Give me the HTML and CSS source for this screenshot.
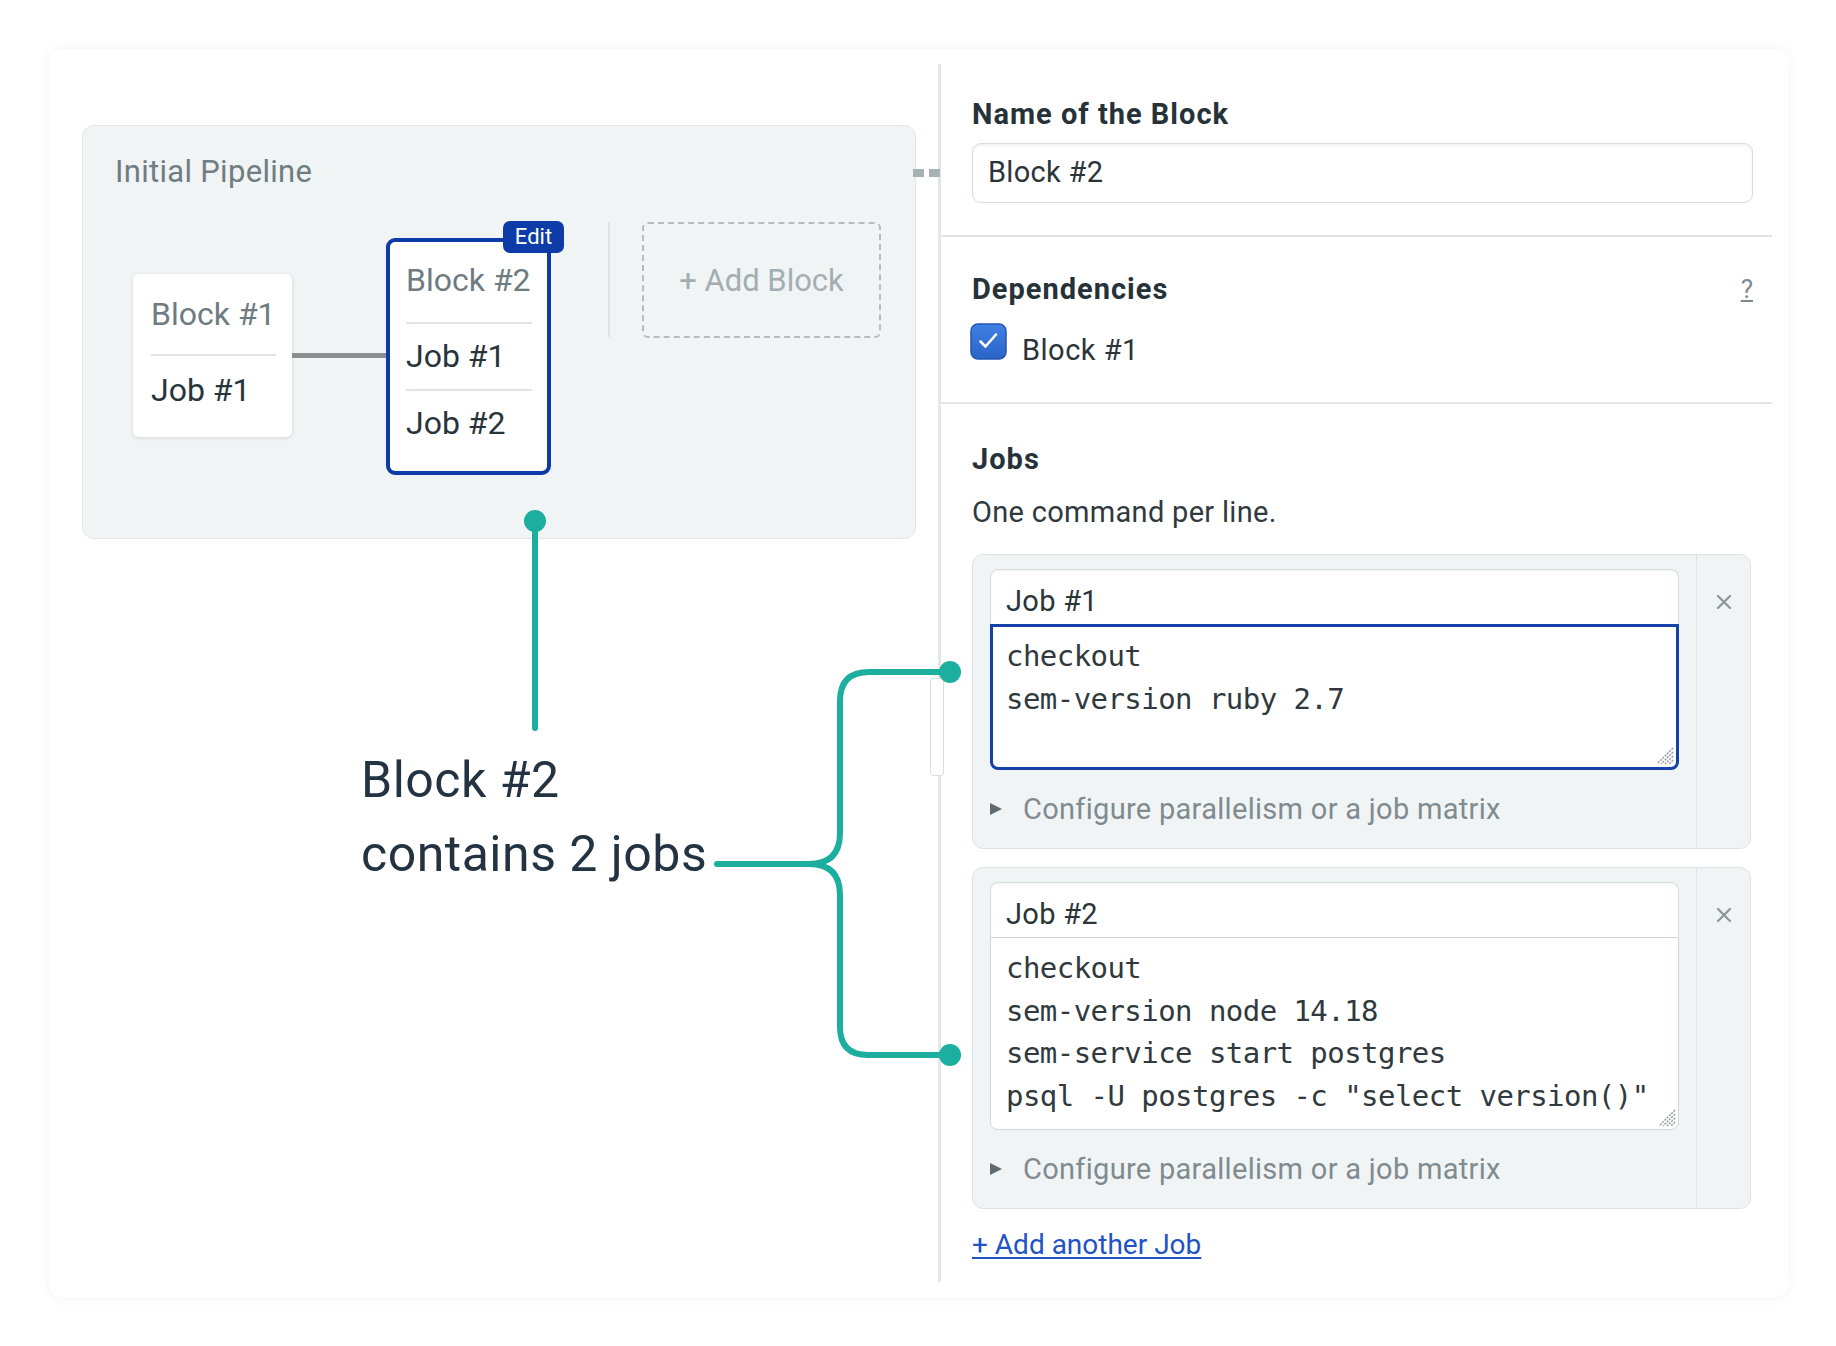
FILE: index.html
```html
<!DOCTYPE html>
<html lang="en">
<head>
<meta charset="utf-8">
<title>Block editor</title>
<link rel="stylesheet" href="styles.css">
</head>
<body>
<div class="card">
  <div class="left">
    <div class="pipeline">
      <div class="pl-title">Initial Pipeline</div>
      <div class="pl-row">
        <div class="blk blk1">
          <div class="blk-title">Block #1</div>
          <div class="blk-job">Job #1</div>
        </div>
        <div class="conn"></div>
        <div class="blk blk2">
          <span class="edit">Edit</span>
          <div class="blk-title">Block #2</div>
          <div class="blk-job">Job #1</div>
          <div class="blk-job">Job #2</div>
        </div>
        <div class="pl-sep"></div>
        <div class="add-block">+ Add Block</div>
      </div>
    </div>
    <div class="note">Block #2<br>contains 2 jobs</div>
  </div>
  <div class="vdiv"></div>
  <div class="right">
    <section class="sec sec-name">
      <div class="lbl">Name of the Block</div>
      <div class="inp">Block #2</div>
    </section>
    <section class="sec sec-dep">
      <div class="dep-head">
        <div class="lbl">Dependencies</div>
        <span class="help">?</span>
      </div>
      <div class="check-row">
        <svg class="checkbox" width="37" height="37" viewBox="0 0 37 37">
          <defs>
            <linearGradient id="cbg" x1="0" y1="0" x2="0" y2="1">
              <stop offset="0" stop-color="#3f82e4"/>
              <stop offset="1" stop-color="#2b63c6"/>
            </linearGradient>
          </defs>
          <rect x="1" y="1" width="35" height="35" rx="7" fill="url(#cbg)" stroke="#2356b6" stroke-width="1.5"/>
          <path d="M10.5 18.5 L15.5 23.5 L26 11.5" fill="none" stroke="#ffffff" stroke-width="2.6" stroke-linecap="round" stroke-linejoin="round"/>
        </svg>
        <span class="check-label">Block #1</span>
      </div>
    </section>
    <section class="sec sec-jobs">
      <div class="lbl">Jobs</div>
      <div class="desc">One command per line.</div>

      <div class="job">
        <div class="job-main">
          <div class="jname">Job #1</div>
          <div class="jcode active">checkout<br>sem-version ruby 2.7
            <svg class="grip" width="22" height="22" viewBox="0 0 22 22"><path d="M21 5 L5 21 M21 9 L9 21 M21 13 L13 21 M21 17 L17 21" stroke="#8f989c" stroke-width="1.5" stroke-dasharray="2 1.2" fill="none"/></svg>
          </div>
          <div class="cfg"><span class="tri"></span>Configure parallelism or a job matrix</div>
        </div>
        <div class="job-side">
          <svg class="x" width="16" height="16" viewBox="0 0 16 16"><path d="M2 2 L14 14 M14 2 L2 14" stroke="#8d979c" stroke-width="2.4" stroke-linecap="round"/></svg>
        </div>
      </div>

      <div class="job job2">
        <div class="job-main">
          <div class="jname">Job #2</div>
          <div class="jcode idle">checkout<br>sem-version node 14.18<br>sem-service start postgres<br>psql -U postgres -c "select version()"
            <svg class="grip" width="22" height="22" viewBox="0 0 22 22"><path d="M21 5 L5 21 M21 9 L9 21 M21 13 L13 21 M21 17 L17 21" stroke="#8f989c" stroke-width="1.5" stroke-dasharray="2 1.2" fill="none"/></svg>
          </div>
          <div class="cfg"><span class="tri"></span>Configure parallelism or a job matrix</div>
        </div>
        <div class="job-side">
          <svg class="x" width="16" height="16" viewBox="0 0 16 16"><path d="M2 2 L14 14 M14 2 L2 14" stroke="#8d979c" stroke-width="2.4" stroke-linecap="round"/></svg>
        </div>
      </div>

      <a class="add-job" href="#">+ Add another Job</a>
    </section>
  </div>

  <div class="dash-link"><span></span><span></span></div>
  <div class="thumb"></div>

  <svg class="overlay" width="1739" height="1248" viewBox="0 0 1739 1248">
    <g fill="none" stroke="#1cae9e" stroke-width="6" stroke-linecap="round" stroke-linejoin="round">
      <path d="M486 472 V679"/>
      <path d="M668 815 H760 Q791 815 791 784 V652 Q791 623 820 623 H901"/>
      <path d="M760 815 Q791 815 791 846 V978 Q791 1006 819 1006 H901"/>
    </g>
    <g fill="#1cae9e">
      <circle cx="486" cy="472" r="11"/>
      <circle cx="901" cy="623" r="11"/>
      <circle cx="901" cy="1006" r="11"/>
    </g>
  </svg>
</div>
</body>
</html>
```

FILE: styles.css
```css
* { box-sizing: border-box; }

html, body {
  margin: 0;
  padding: 0;
  background: #ffffff;
}

body {
  font-family: Roboto, "Noto Sans", Arial, sans-serif;
  color: #27343a;
  width: 1836px;
  height: 1346px;
  overflow: hidden;
}

.card {
  position: relative;
  margin: 49px 0 0 49px;
  width: 1739px;
  height: 1248px;
  background: #ffffff;
  border-radius: 12px;
  box-shadow: 0 0 14px rgba(0, 0, 0, 0.05);
  display: flex;
}

/* ---------- left: pipeline ---------- */
.left {
  width: 889px;
  padding: 76px 0 0 33px;
}

.pipeline {
  width: 834px;
  height: 414px;
  background: #f1f4f5;
  border: 1px solid #e1e6e8;
  border-radius: 12px;
  padding: 28px 0 0 32px;
}

.pl-title {
  font-size: 31px;
  line-height: 36px;
  letter-spacing: 0.3px;
  color: #6f7c82;
}

.pl-row {
  display: flex;
  align-items: flex-start;
  margin: 32px 0 0 18px;
}

.blk {
  background: #ffffff;
  font-size: 32px;
  white-space: nowrap;
}

.blk-title {
  color: #6e7b81;
  border-bottom: 2px solid #dfe5e7;
}

.blk-job {
  color: #27343a;
}

.blk1 {
  width: 159px;
  margin-top: 52px;
  padding: 0 16px 13px 18px;
  border-radius: 6px;
  box-shadow: 0 1px 4px rgba(0, 0, 0, 0.12);
}

.blk1 .blk-title { line-height: 80px; }
.blk1 .blk-job { line-height: 68px; }

.conn {
  width: 94px;
  height: 5px;
  margin-top: 131px;
  background: #8c8f90;
}

.blk2 {
  position: relative;
  width: 165px;
  height: 237px;
  margin-top: 16px;
  padding: 0 15px 15px 16px;
  border: 4px solid #0d3ca8;
  border-radius: 9px;
}

.blk2 .blk-title {
  line-height: 76px;
  padding-bottom: 4px;
}

.blk2 .blk-job {
  line-height: 65px;
  border-bottom: 2px solid #dfe5e7;
}

.blk2 .blk-job:last-child { border-bottom: none; }

.edit {
  position: absolute;
  top: -21px;
  right: -17px;
  width: 61px;
  height: 32px;
  border-radius: 7px;
  background: #0d3ca8;
  color: #ffffff;
  font-size: 22px;
  line-height: 32px;
  text-align: center;
}

.pl-sep {
  width: 2px;
  height: 115px;
  margin-left: 57px;
  background: #dde3e5;
}

.add-block {
  width: 239px;
  height: 116px;
  margin-left: 32px;
  border: 2px dashed #b3bdc1;
  border-radius: 6px;
  display: flex;
  align-items: center;
  justify-content: center;
  font-size: 31px;
  color: #a3adb2;
}

.note {
  margin: 204px 0 0 279px;
  font-size: 50px;
  line-height: 74px;
  letter-spacing: 0.5px;
  color: #243341;
  white-space: nowrap;
}

.vdiv {
  width: 3px;
  margin: 15px 0;
  background: #e2e7e9;
}

/* ---------- right: form ---------- */
.right {
  flex: 1;
  padding-right: 16px;
}

.sec {
  padding: 0 19px 0 31px;
  border-bottom: 2px solid #e0e5e7;
}

.lbl {
  font-size: 29px;
  font-weight: 700;
  line-height: 34px;
  letter-spacing: 1px;
  color: #263238;
}

.sec-name {
  padding-top: 48px;
  padding-bottom: 32px;
}

.inp {
  margin-top: 12px;
  height: 60px;
  border: 1.5px solid #d5dcdf;
  border-radius: 9px;
  padding-left: 15px;
  font-size: 29px;
  letter-spacing: 0.3px;
  line-height: 56px;
  color: #2a3439;
  background: #ffffff;
  box-shadow: inset 0 2px 3px rgba(0, 0, 0, 0.05);
}

.sec-dep {
  padding-top: 35px;
  padding-bottom: 42px;
}

.dep-head {
  display: flex;
  justify-content: space-between;
  align-items: center;
}

.help {
  font-size: 26px;
  color: #7d898e;
  text-decoration: underline;
}

.check-row {
  display: flex;
  align-items: flex-end;
  margin-top: 17px;
  margin-left: -2px;
  height: 37px;
}

.checkbox { display: block; }

.check-label {
  margin-left: 15px;
  margin-bottom: -7px;
  font-size: 29px;
  letter-spacing: 0.5px;
  line-height: 34px;
  color: #2a3439;
}

.sec-jobs {
  padding-top: 38px;
  border-bottom: none;
}

.desc {
  margin-top: 19px;
  font-size: 29px;
  letter-spacing: 0.3px;
  line-height: 34px;
  color: #2f393e;
}

.job {
  width: 779px;
  margin-top: 25px;
  display: flex;
  background: #f1f4f5;
  border: 1px solid #dde3e6;
  border-radius: 11px;
}

.job2 { margin-top: 18px; }

.job-main {
  flex: 1;
  padding: 14px 17px 0 17px;
}

.job-side {
  width: 54px;
  border-left: 1.5px solid #dde3e6;
  display: flex;
  justify-content: center;
  padding-top: 39px;
}

.x { display: block; }

.jname {
  height: 55px;
  border: 1.5px solid #d5dcdf;
  border-bottom: none;
  border-radius: 8px 8px 0 0;
  background: #ffffff;
  padding: 5px 0 0 15px;
  font-size: 29px;
  letter-spacing: 0.3px;
  line-height: 52px;
  color: #2a3439;
  box-shadow: inset 0 2px 3px rgba(0, 0, 0, 0.04);
}

.jcode {
  position: relative;
  background: #ffffff;
  border-radius: 0 0 8px 8px;
  font-family: "DejaVu Sans Mono", "Liberation Mono", monospace;
  font-size: 29px;
  letter-spacing: -0.55px;
  color: #30393d;
  white-space: nowrap;
}

.jcode.active {
  height: 146px;
  border: 3px solid #1541a9;
  padding: 8px 13px;
  line-height: 43px;
}

.jcode.idle {
  height: 193px;
  border: 1.5px solid #d0d7da;
  padding: 9px 15px;
  line-height: 42.5px;
}

.grip {
  position: absolute;
  right: 2px;
  bottom: 2px;
}

.cfg {
  height: 78px;
  display: flex;
  align-items: center;
  font-size: 29px;
  letter-spacing: 0.3px;
  color: #7f8b90;
}

.tri {
  width: 0;
  height: 0;
  margin-right: 21px;
  border-left: 12px solid #5f6b70;
  border-top: 6px solid transparent;
  border-bottom: 6px solid transparent;
}

.add-job {
  display: inline-block;
  margin-top: 19px;
  font-size: 28px;
  line-height: 34px;
  color: #2152c6;
  text-decoration: underline;
  text-underline-offset: 3px;
}

/* ---------- overlays ---------- */
.dash-link {
  position: absolute;
  left: 864px;
  top: 120px;
  display: flex;
  gap: 5px;
}

.dash-link span {
  width: 11px;
  height: 8px;
  background: #a5b2b6;
}

.thumb {
  position: absolute;
  left: 881px;
  top: 629px;
  width: 14px;
  height: 98px;
  border: 1.5px solid #d8dee1;
  border-radius: 3px;
  background: #ffffff;
}

.overlay {
  position: absolute;
  left: 0;
  top: 0;
  pointer-events: none;
}
```
